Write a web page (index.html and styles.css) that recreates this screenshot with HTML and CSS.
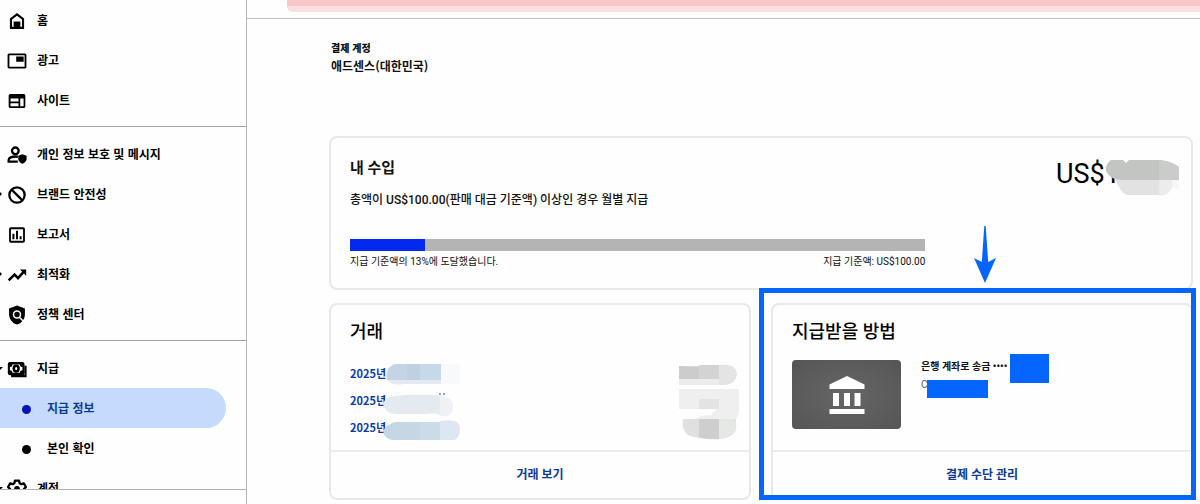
FILE: index.html
```html
<!DOCTYPE html>
<html lang="ko">
<head>
<meta charset="utf-8">
<meta name="viewport" content="width=device-width, initial-scale=1">
<title>지급 정보</title>
<link rel="stylesheet" href="styles.css">
</head>
<body>
<div class="app">
  <aside class="sidebar">
    <nav class="nav">
      <div class="nav-group">
        <a class="nav-item" href="#"><span class="caret"></span>
          <svg class="icon" viewBox="0 0 24 24"><path fill-rule="evenodd" d="M12 2.500 3.500 9v12.500h17V9zM6 19V10.200l6-4.500 6 4.500V19h-2v-6.500H8V19z"/></svg>
          <span>홈</span></a>
        <a class="nav-item" href="#"><span class="caret"></span>
          <svg class="icon" viewBox="0 0 24 24"><path fill-rule="evenodd" d="M2.500 3h19A1.800 1.800 0 0 1 23.300 5v14a1.800 1.800 0 0 1-1.800 2h-19A1.800 1.800 0 0 1 .7 19V5a1.800 1.800 0 0 1 1.800-2zM2.900 5.200v13.600h18.200V5.200zM11 6.500h9v6.500h-9z"/></svg>
          <span>광고</span></a>
        <a class="nav-item" href="#"><span class="caret"></span>
          <svg class="icon" viewBox="0 0 24 24"><path fill-rule="evenodd" d="M4 3.500h16a2 2 0 0 1 2 2v13a2 2 0 0 1-2 2H4a2 2 0 0 1-2-2v-13a2 2 0 0 1 2-2zM4.200 9v3.600h9.600V9zM4.200 14.600v3.700h9.600v-3.700zM15.900 9v9.300h4V9z"/></svg>
          <span>사이트</span></a>
      </div>
      <div class="nav-group">
        <a class="nav-item" href="#"><span class="caret"></span>
          <svg class="icon" viewBox="0 0 24 24"><circle cx="10" cy="7" r="4" fill="none" stroke="currentColor" stroke-width="2.800"/><path d="M13 20H2v-2c0-2.700 4-4.200 8-4.200 1 0 2 .1 3 .3" fill="none" stroke="currentColor" stroke-width="2.800"/><path d="m18.500 11 5 2v3.500c0 2.800-2.200 5.200-5 6-2.800-.8-5-3.200-5-6V13z"/></svg>
          <span>개인 정보 보호 및 메시지</span></a>
        <a class="nav-item" href="#"><span class="caret caret-right"></span>
          <svg class="icon" viewBox="0 0 24 24"><circle cx="12" cy="12" r="9.200" fill="none" stroke="currentColor" stroke-width="2.700"/><path d="m5.500 5.500 13 13" stroke="currentColor" stroke-width="2.700"/></svg>
          <span>브랜드 안전성</span></a>
        <a class="nav-item" href="#"><span class="caret"></span>
          <svg class="icon" viewBox="0 0 24 24"><path fill-rule="evenodd" d="M4.500 2.800h15a2 2 0 0 1 2 2v14.400a2 2 0 0 1-2 2h-15a2 2 0 0 1-2-2V4.800a2 2 0 0 1 2-2zM4.700 5v14h14.600V5zM6.500 10.500h2.400V17H6.500zM10.800 7h2.400v10h-2.400zM15.100 13.500h2.400V17h-2.400z"/></svg>
          <span>보고서</span></a>
        <a class="nav-item" href="#"><span class="caret caret-right"></span>
          <svg class="icon" viewBox="0 0 24 24"><path d="m2 18.500 7-7 4.200 4.200 7-7.700" fill="none" stroke="currentColor" stroke-width="3"/><path d="M15.500 5.500H23V13z"/></svg>
          <span>최적화</span></a>
        <a class="nav-item" href="#"><span class="caret"></span>
          <svg class="icon" viewBox="0 0 24 24"><path d="m12 .5 9.500 3.800V11c0 5.700-4 10.900-9.500 12.500C6.500 21.900 2.500 16.700 2.500 11V4.300z"/><circle cx="12" cy="11.500" r="4.200" fill="none" stroke="#fff" stroke-width="1.800"/><path d="m14.500 14.500 4.500 4.500" stroke="#fff" stroke-width="1.800"/></svg>
          <span>정책 센터</span></a>
      </div>
      <div class="nav-group">
        <a class="nav-item" href="#"><span class="caret caret-down"></span>
          <svg class="icon" viewBox="0 0 24 24"><path d="M3.500 3.500h15A2.500 2.500 0 0 1 21 6v11a2.500 2.500 0 0 1-2.500 2.500h-15A2.500 2.500 0 0 1 1 17V6a2.500 2.500 0 0 1 2.500-2.500z"/><path d="M22.200 8v12.500H5" fill="none" stroke="currentColor" stroke-width="2.600"/><path d="M6.500 6.500h9a3 3 0 0 0 3 3v4a3 3 0 0 0-3 3h-9a3 3 0 0 0-3-3v-4a3 3 0 0 0 3-3z" fill="#fff"/><ellipse cx="11" cy="11.500" rx="4.400" ry="5"/><ellipse cx="11" cy="11.500" rx="1.300" ry="2" fill="#fff"/></svg>
          <span>지급</span></a>
        <a class="nav-item nav-sub nav-active" href="#" aria-current="page"><span class="dot"></span><span>지급 정보</span></a>
        <a class="nav-item nav-sub" href="#"><span class="dot"></span><span>본인 확인</span></a>
        <a class="nav-item" href="#"><span class="caret caret-down"></span>
          <svg class="icon" viewBox="0 0 24 24"><path d="M9.500 2h5l.7 3 2 1.200 3-.9 2.500 4.300-2.300 2.400 2.300 2.400-2.500 4.300-3-.9-2 1.200-.7 3h-5l-.7-3-2-1.200-3 .9-2.500-4.300L3.600 12 1.300 9.600l2.500-4.300 3 .9 2-1.200z" fill="none" stroke="currentColor" stroke-width="2.800" stroke-linejoin="round"/><circle cx="12" cy="12" r="3.500"/></svg>
          <span>계정</span></a>
      </div>
    </nav>
  </aside>

  <main class="main">
    <header class="topbar"><div class="alert"></div></header>
    <div class="content">
      <section class="account">
        <p class="account-label">결제 계정</p>
        <p class="account-name">애드센스(대한민국)</p>
      </section>

      <section class="card earnings">
        <div class="earnings-head">
          <h2 class="title-small">내 수입</h2>
          <div class="amount">US$1
            <svg class="amount-mask" viewBox="0 0 74 36"><path d="M6 0h12l3 3 3-3h32q12 2 18 7v13H16C8 20 2 15 1 10 1 5 3 2 6 0z" fill="#c3c5c3"/><path d="M54 0q14 2 20 7v13H54z" fill="#cacccb"/><path d="M10 20h44v15H37H22q-5-2-8-8z" fill="#e1e2e1"/><path d="M54 20h13v8q-4 8-13 8z" fill="#ececec"/><path d="M67 20h7v9l-7-1z" fill="#f7f7f7"/></svg>
          </div>
        </div>
        <p class="earnings-note">총액이 US$100.00(판매 대금 기준액) 이상인 경우 월별 지급</p>
        <div class="threshold">
          <progress class="meter" value="13" max="100" aria-label="지급 기준액"></progress>
          <div class="meter-labels"><span>지급 기준액의 13%에 도달했습니다.</span><span>지급 기준액: US$100.00</span></div>
        </div>
      </section>

      <div class="cards">
        <section class="card">
          <div class="card-body">
            <h2 class="title">거래</h2>
            <div class="transactions">
              <div class="months">
                <a href="#">2025년</a>
                <a href="#">2025년</a>
                <a href="#">2025년</a>
                <svg class="months-mask" viewBox="0 0 78 78"><path d="M14 1h23v16H4C2 9 6 1 14 1z" fill="#c5d4e5"/><path d="M24 1h34v16H24z" fill="#bfd1e1"/><path d="M37 1h21v16H37z" fill="#c7d8e8"/><path d="M4 17h54v4H20q-11 2-16-4z" fill="#e4e9f0"/><path d="M58 1h19v20H58z" fill="#f7f9fa"/><path d="M12 33q13-2 26-1h15q15 1 17 11-2 12-13 9-6-3-12-1H12Q2 50 0 41q2-7 12-8z" fill="#e5eaf1"/><path d="M57 32q13 2 13 11 0 9-7 10h-6z" fill="#eff1f5"/><path d="M12 59h45v18H10C-2 75-4 64 12 59z" fill="#c5d7e5"/><path d="M37 59h20v18H37z" fill="#cbdce8"/><path d="M57 58q20-3 20 8 0 9-6 11H57z" fill="#dce7f1"/><path d="M56 31h2m2 0h2" stroke="#2848a0"/></svg>
              </div>
              <svg class="totals-mask" viewBox="0 0 61 76"><path d="M0 2q20 1 40-1v14H0z" fill="#cbcccb"/><path d="M20 1h20v14H20z" fill="#d2d3d2"/><path d="M40 1q17-2 18 9-1 10-12 11h-6z" fill="#e3e4e3"/><path d="M0 15h40v6H0z" fill="#ececeb"/><path d="M0 25h60v22q-1 7-5 10H12q8-6 20-6l6-6H0z" fill="#eeefee"/><path d="M0 45h38l-6 5q-12 0-20 5H0z" fill="#fefefe"/><path d="M20 35h20v10H20z" fill="#e2e4e2"/><path d="M4 55h53v3H57q1 5-1 10-5 7-18 7Q20 76 9 71 2 65 4 55z" fill="#dfe1df"/><path d="M20 55h20v20q-10 1-20-2z" fill="#cdcecd"/><path d="M40 55h15q5 10-1 15-5 5-14 5z" fill="#e6e8e6"/></svg>
            </div>
          </div>
          <a class="card-action" href="#">거래 보기</a>
        </section>

        <section class="card method">
          <div class="card-body">
            <h2 class="title">지급받을 방법</h2>
            <div class="method-row">
              <div class="bank">
                <svg class="bank-icon" viewBox="0 0 36 38"><path d="M18 0 35.500 8.500V13H.5V8.500zM4 17h6v13H4zM15 17h6v13h-6zM25.500 17h6v13h-6zM.5 33h35v5H.5z"/></svg>
              </div>
              <div class="method-text">
                <p class="method-name">은행 계좌로 송금 ••••<span class="mask mask-number"></span></p>
                <p class="method-detail">C<span class="mask mask-holder"></span></p>
              </div>
            </div>
          </div>
          <a class="card-action" href="#">결제 수단 관리</a>
          <div class="highlight"></div>
          <svg class="arrow" viewBox="0 0 22 57"><path d="M10.300 0h1.400l2.500 36L22 32 11 57 0 32l7.800 4z"/></svg>
        </section>
      </div>
    </div>
  </main>
</div>
</body>
</html>
```
FILE: styles.css
```css
* { box-sizing: border-box; }

body {
  margin: 0;
  background: #fefefe;
  color: #111;
  font-family: Roboto, "Noto Sans CJK KR", sans-serif;
  font-size: 12px;
}

h2, p { margin: 0; }
a { color: #0b3a94; text-decoration: none; }

.app {
  display: grid;
  grid-template-columns: 247px 1fr;
  height: 100vh;
  overflow: hidden;
}

/* Sidebar */
.sidebar {
  min-height: 0;
  padding-bottom: 14px;
  border-right: 1px solid #b8b8b8;
}
.nav {
  height: 100%;
  overflow: hidden;
  border-bottom: 1px solid #b0b0b0;
}
.nav-group { padding: 7px 0 6px; border-bottom: 1px solid #a4a4a4; }
.nav-group:first-child { padding-top: 0; }
.nav-group:last-child { border-bottom: 0; }
.nav-item {
  display: flex;
  align-items: center;
  height: 40px;
  margin-right: 20px;
  color: #000;
  font-family: "Noto Sans CJK KR", sans-serif;
  font-weight: 700;
  line-height: 18px;
}
.icon {
  width: 20px;
  height: 20px;
  margin: 2px 10px 0 0;
  fill: currentColor;
}
.caret { width: 7px; }
.caret-right::before,
.caret-down::before { content: ""; display: block; width: 0; border: 2px solid transparent; }
.caret-right::before { border-width: 2px 0 2px 2px; border-left-color: #000; }
.caret-down::before { border-width: 3px 3px 0 0; border-top-color: #000; }
.nav-sub { gap: 16px; padding-left: 22px; }
.dot { width: 9px; height: 9px; margin-top: 3px; border-radius: 50%; background: currentColor; }
.nav-active {
  border-radius: 0 20px 20px 0;
  background: #c5dafc;
  color: #0b3a94;
}
.nav-active .dot { background: #0414b8; }

/* Page */
.main { min-width: 0; }
.topbar { height: 19px; padding-left: 40px; border-bottom: 1px solid #c0c0c0; }
.alert {
  height: 12px;
  border-bottom: 6px solid #fbdfe0;
  border-radius: 0 0 0 6px;
  background: #f7c6c8;
}
.content { padding: 21px 7px 0 82px; }
.account { margin-bottom: 60px; padding-left: 2px; font-family: "Noto Sans CJK KR", sans-serif; }
.account-label { font-size: 10px; font-weight: 900; line-height: 16px; }
.account-name { font-weight: 700; line-height: 20px; }

.card {
  position: relative;
  border: 2px solid #e8e8e8;
  border-radius: 8px;
  background: #fefefe;
}
.earnings { padding: 19px 12px 18px 19px; }
.earnings-head { display: flex; justify-content: space-between; height: 22px; }
.title-small { font-size: 15px; font-weight: 700; line-height: 22px; }
.amount {
  position: relative;
  width: 123px;
  color: #000;
  font-size: 27px;
  line-height: 34px;
}
.amount-mask { position: absolute; top: 3px; right: 0; width: 74px; height: 36px; }
.earnings-note { margin: 12px 0 30px; font-weight: 500; line-height: 18px; }
.threshold { width: 70%; padding-right: 5px; }
.meter {
  display: block;
  width: 100%;
  height: 12px;
  border: 0;
  appearance: none;
  background: #b4b4b4;
}
.meter::-webkit-progress-bar { background: #b4b4b4; }
.meter::-webkit-progress-value { background: #0429ee; }
.meter-labels {
  display: flex;
  justify-content: space-between;
  margin-top: 3px;
  font-size: 10px;
  line-height: 16px;
}

.cards { display: grid; grid-template-columns: 1fr 1fr; gap: 20px; margin-top: 13px; }
.card-body { height: 147px; padding: 15px 9px 0 19px; border-bottom: 2px solid #ececec; }
.title { margin-bottom: 16px; color: #000; font-size: 18px; font-weight: 500; line-height: 24px; }
.card-action {
  display: block;
  padding: 14px 0;
  font-weight: 700;
  line-height: 18px;
  text-align: center;
}
.transactions { display: flex; justify-content: space-between; }
.months {
  position: relative;
  display: grid;
  font-family: "Noto Sans CJK KR", sans-serif;
  font-size: 11px;
  font-weight: 700;
  line-height: 27px;
}
.months a { color: #0a3ca8; }
.months-mask { position: absolute; top: 3px; left: 33px; width: 78px; height: 78px; }
.totals-mask { width: 61px; height: 76px; margin-top: 4px; }

/* Payment method */
.method-row { display: flex; gap: 20px; }
.bank {
  display: grid;
  place-items: center;
  width: 109px;
  height: 69px;
  border-radius: 4px;
  background: radial-gradient(#666, #555);
}
.bank-icon { width: 36px; height: 38px; fill: #fff; }
.method-text { font-size: 10px; }
.method-name { position: relative; font-weight: 700; line-height: 14px; }
.method-detail { position: relative; margin-top: 4px; color: #555; line-height: 14px; }
.mask { position: absolute; background: #0466ff; }
.mask-number { top: -6px; left: 89px; width: 39px; height: 29px; }
.mask-holder { top: 2px; left: 6px; width: 61px; height: 18px; }
.highlight { position: absolute; inset: -17px -5px -2px -14px; border: 5px solid #0466ff; }
.arrow { position: absolute; top: -79px; left: 201px; width: 22px; height: 57px; fill: #0466ff; }
```
